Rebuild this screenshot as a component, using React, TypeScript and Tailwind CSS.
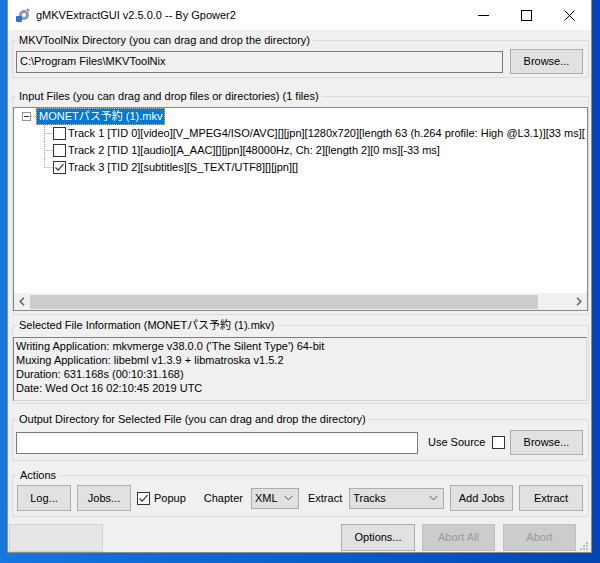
import React from 'react';

const CheckBox: React.FC<{ checked?: boolean }> = ({ checked }) => (
    <span className="w-[13px] h-[13px] border border-[#333333] bg-white flex items-center justify-center shrink-0">
        {checked && (
            <svg width="11" height="11" viewBox="0 0 11 11">
                <path d="M1.5 5.5 L4.2 8.2 L9.5 2.2" stroke="#333333" strokeWidth="1.2" fill="none" />
            </svg>
        )}
    </span>
);

const Btn: React.FC<{ children: React.ReactNode; className?: string; disabled?: boolean }> = ({ children, className = '', disabled }) => (
    <button
        className={`flex items-center justify-center border text-[11px] shrink-0 ${disabled ? 'bg-[#cccccc] border-[#bfbfbf] text-[#9a9a9a]' : 'bg-[#e1e1e1] border-[#adadad] text-black'} ${className}`}
    >
        {children}
    </button>
);

const Combo: React.FC<{ value: string; className?: string }> = ({ value, className = '' }) => (
    <div className={`h-[21px] flex items-center justify-between bg-[#e1e1e1] border border-[#adadad] pl-[3px] pr-[5px] shrink-0 ${className}`}>
        <span>{value}</span>
        <svg width="9" height="6" viewBox="0 0 9 6">
            <path d="M0.5 0.8 L4.5 4.8 L8.5 0.8" stroke="#555555" strokeWidth="1" fill="none" />
        </svg>
    </div>
);

const Group: React.FC<{ label: string; className?: string; legendClass?: string; children: React.ReactNode }> = ({ label, className = '', legendClass = '', children }) => (
    <fieldset className={`ml-[4px] mr-[2px] min-w-0 border border-[#dcdcdc] rounded-[2px] ${className}`}>
        <legend className={`px-[3px] leading-[15px] ${legendClass}`}>{label}</legend>
        {children}
    </fieldset>
);

const Branch: React.FC<{ last?: boolean }> = ({ last }) => (
    <svg width="17" height="17" viewBox="0 0 17 17" className="shrink-0">
        <line x1="8.5" y1="0" x2="8.5" y2={last ? 8.5 : 17} stroke="#a0a0a0" strokeDasharray="1 1" />
        <line x1="8.5" y1="8.5" x2="17" y2="8.5" stroke="#a0a0a0" strokeDasharray="1 1" />
    </svg>
);

const tracks = [
    { label: 'Track 1 [TID 0][video][V_MPEG4/ISO/AVC][][jpn][1280x720][length 63 (h.264 profile: High @L3.1)][33 ms][', checked: false },
    { label: 'Track 2 [TID 1][audio][A_AAC][][jpn][48000Hz, Ch: 2][length 2][0 ms][-33 ms]', checked: false },
    { label: 'Track 3 [TID 2][subtitles][S_TEXT/UTF8][][jpn][]', checked: true },
];

const infoLines = [
    "Writing Application: mkvmerge v38.0.0 ('The Silent Type') 64-bit",
    'Muxing Application: libebml v1.3.9 + libmatroska v1.5.2',
    'Duration: 631.168s (00:10:31.168)',
    'Date: Wed Oct 16 02:10:45 2019 UTC',
];

const App: React.FC = () => {
    return (
        <div className="w-[600px] h-[563px] bg-gradient-to-r from-[#1677e0] via-[#0b5fcb] to-[#0445b2] pl-[7px] pr-[8px] pb-[10px] font-['Liberation_Sans','Noto_Sans_CJK_JP',sans-serif] text-[11px] text-black overflow-hidden">
            <div className="h-full flex flex-col bg-[#f0f0f0] border-x border-b border-[#8c8c8c]">
                {/* title bar */}
                <div className="h-[30px] bg-white flex items-center shrink-0">
                    <svg width="15" height="15" viewBox="0 0 15 15" className="ml-[7px]">
                        <circle cx="9" cy="7" r="5" fill="#8a9bb0" />
                        <circle cx="9" cy="7" r="2" fill="#ffffff" />
                        <rect x="1" y="8" width="6" height="6" rx="1" fill="#2f6fd0" />
                        <path d="M12 1 L14 3" stroke="#c04040" strokeWidth="1.5" />
                    </svg>
                    <span className="ml-[6px] text-[11px]">gMKVExtractGUI v2.5.0.0 -- By Gpower2</span>
                    <div className="ml-auto flex h-full">
                        <div className="w-[43px] flex items-center justify-center">
                            <svg width="11" height="11" viewBox="0 0 11 11"><line x1="0" y1="5.5" x2="11" y2="5.5" stroke="#000" /></svg>
                        </div>
                        <div className="w-[43px] flex items-center justify-center">
                            <svg width="11" height="11" viewBox="0 0 11 11"><rect x="0.5" y="0.5" width="10" height="10" stroke="#000" fill="none" /></svg>
                        </div>
                        <div className="w-[43px] flex items-center justify-center">
                            <svg width="11" height="11" viewBox="0 0 11 11">
                                <line x1="0.5" y1="0.5" x2="10.5" y2="10.5" stroke="#000" />
                                <line x1="10.5" y1="0.5" x2="0.5" y2="10.5" stroke="#000" />
                            </svg>
                        </div>
                    </div>
                </div>

                {/* MKVToolNix directory */}
                <Group label="MKVToolNix Directory (you can drag and drop the directory)" className="mt-[3px] pl-[3px] pr-[5px] pt-[1px] pb-[3px]">
                    <div className="flex items-center h-[25px] gap-[7px]">
                        <div className="flex-1 h-[22px] border border-[#7a7a7a] bg-[#f0f0f0] flex items-center pl-[3px]">C:\Program Files\MKVToolNix</div>
                        <Btn className="w-[73px] h-[25px]">Browse...</Btn>
                    </div>
                </Group>

                {/* Input files */}
                <Group label="Input Files (you can drag and drop files or directories) (1 files)" className="mt-[11px] pt-[3px] pb-[3px]" legendClass="ml-[3px]">
                    <div className="h-[204px] border border-[#828790] bg-white flex flex-col overflow-hidden">
                        <div className="flex-1 min-w-0 overflow-hidden whitespace-nowrap">
                            <div className="h-[17px] flex items-center">
                                <span className="w-[8px] shrink-0" />
                                <span className="w-[9px] h-[9px] border border-[#919191] bg-white flex items-center justify-center shrink-0">
                                    <span className="w-[5px] h-[1px] bg-[#333333]" />
                                </span>
                                <span className="w-[5px] border-t border-dotted border-[#a0a0a0] shrink-0" />
                                <span className="h-[17px] flex items-center px-[2px] bg-[#0078d7] text-white border border-dotted border-[#f0c060]">MONETパス予約 (1).mkv</span>
                            </div>
                            {tracks.map((t, i) => (
                                <div key={t.label} className="h-[17px] flex items-center">
                                    <span className="w-[22px] shrink-0" />
                                    <Branch last={i === tracks.length - 1} />
                                    <CheckBox checked={t.checked} />
                                    <span className="ml-[2px]">{t.label}</span>
                                </div>
                            ))}
                        </div>
                        <div className="h-[17px] bg-[#f0f0f0] flex items-center shrink-0">
                            <div className="w-[16px] h-full flex items-center justify-center shrink-0">
                                <svg width="6" height="9" viewBox="0 0 6 9"><path d="M5 0.8 L1.2 4.5 L5 8.2" stroke="#606060" strokeWidth="1.5" fill="none" /></svg>
                            </div>
                            <div className="flex-1 h-[14px] flex">
                                <div className="w-[508px] h-full bg-[#cdcdcd]" />
                            </div>
                            <div className="w-[16px] h-full flex items-center justify-center shrink-0">
                                <svg width="6" height="9" viewBox="0 0 6 9"><path d="M1 0.8 L4.8 4.5 L1 8.2" stroke="#606060" strokeWidth="1.5" fill="none" /></svg>
                            </div>
                        </div>
                    </div>
                </Group>

                {/* Selected file info */}
                <Group label="Selected File Information (MONETパス予約 (1).mkv)" className="mt-[3px] pr-[1px] pt-[4px] pb-[2px]" legendClass="ml-[3px]">
                    <div className="h-[64px] border-t border-l border-[#7f7f7f] border-r border-b border-r-[#d4d4d4] border-b-[#d4d4d4] bg-[#f0f0f0] pl-[2px] pt-[1px] leading-[14px]">
                        {infoLines.map(l => (
                            <div key={l}>{l}</div>
                        ))}
                    </div>
                </Group>

                {/* Output directory */}
                <Group label="Output Directory for Selected File (you can drag and drop the directory)" className="mt-[8px] pl-[3px] pr-[5px] pt-[3px] pb-[5px]">
                    <div className="flex items-center h-[25px]">
                        <div className="w-[402px] h-[22px] border border-[#7a7a7a] bg-white shrink-0" />
                        <span className="ml-[10px]">Use Source</span>
                        <span className="ml-[7px]"><CheckBox /></span>
                        <Btn className="ml-auto w-[73px] h-[25px]">Browse...</Btn>
                    </div>
                </Group>

                {/* Actions */}
                <Group label="Actions" className="mt-[7px] pl-[4px] pr-[5px] pt-[2px] pb-[5px]">
                    <div className="flex items-center h-[26px]">
                        <Btn className="w-[54px] h-[26px]">Log...</Btn>
                        <Btn className="ml-[6px] w-[54px] h-[26px]">Jobs...</Btn>
                        <span className="ml-[6px]"><CheckBox checked /></span>
                        <span className="ml-[4px]">Popup</span>
                        <span className="ml-[18px]">Chapter</span>
                        <Combo value="XML" className="ml-[8px] w-[48px]" />
                        <span className="ml-[9px]">Extract</span>
                        <Combo value="Tracks" className="ml-[7px] w-[95px]" />
                        <Btn className="ml-[6px] w-[63px] h-[26px]">Add Jobs</Btn>
                        <Btn className="ml-auto w-[64px] h-[26px]">Extract</Btn>
                    </div>
                </Group>

                {/* bottom bar */}
                <div className="mt-[7px] h-[28px] flex items-end shrink-0">
                    <div className="ml-[1px] w-[94px] h-[28px] bg-[#e6e6e6] border border-[#d2d2d2]" />
                    <Btn className="ml-auto w-[74px] h-[27px] mb-[1px]">Options...</Btn>
                    <Btn disabled className="ml-[7px] w-[73px] h-[27px] mb-[1px]">Abort All</Btn>
                    <Btn disabled className="ml-[8px] w-[73px] h-[27px] mb-[1px]">Abort</Btn>
                    <svg width="15" height="12" viewBox="0 0 15 12" className="shrink-0">
                        <rect x="10" y="2" width="2" height="2" fill="#bdbdbd" />
                        <rect x="7" y="5" width="2" height="2" fill="#bdbdbd" />
                        <rect x="10" y="5" width="2" height="2" fill="#bdbdbd" />
                        <rect x="4" y="8" width="2" height="2" fill="#bdbdbd" />
                        <rect x="7" y="8" width="2" height="2" fill="#bdbdbd" />
                        <rect x="10" y="8" width="2" height="2" fill="#bdbdbd" />
                    </svg>
                </div>
            </div>
        </div>
    );
};

export default App;
